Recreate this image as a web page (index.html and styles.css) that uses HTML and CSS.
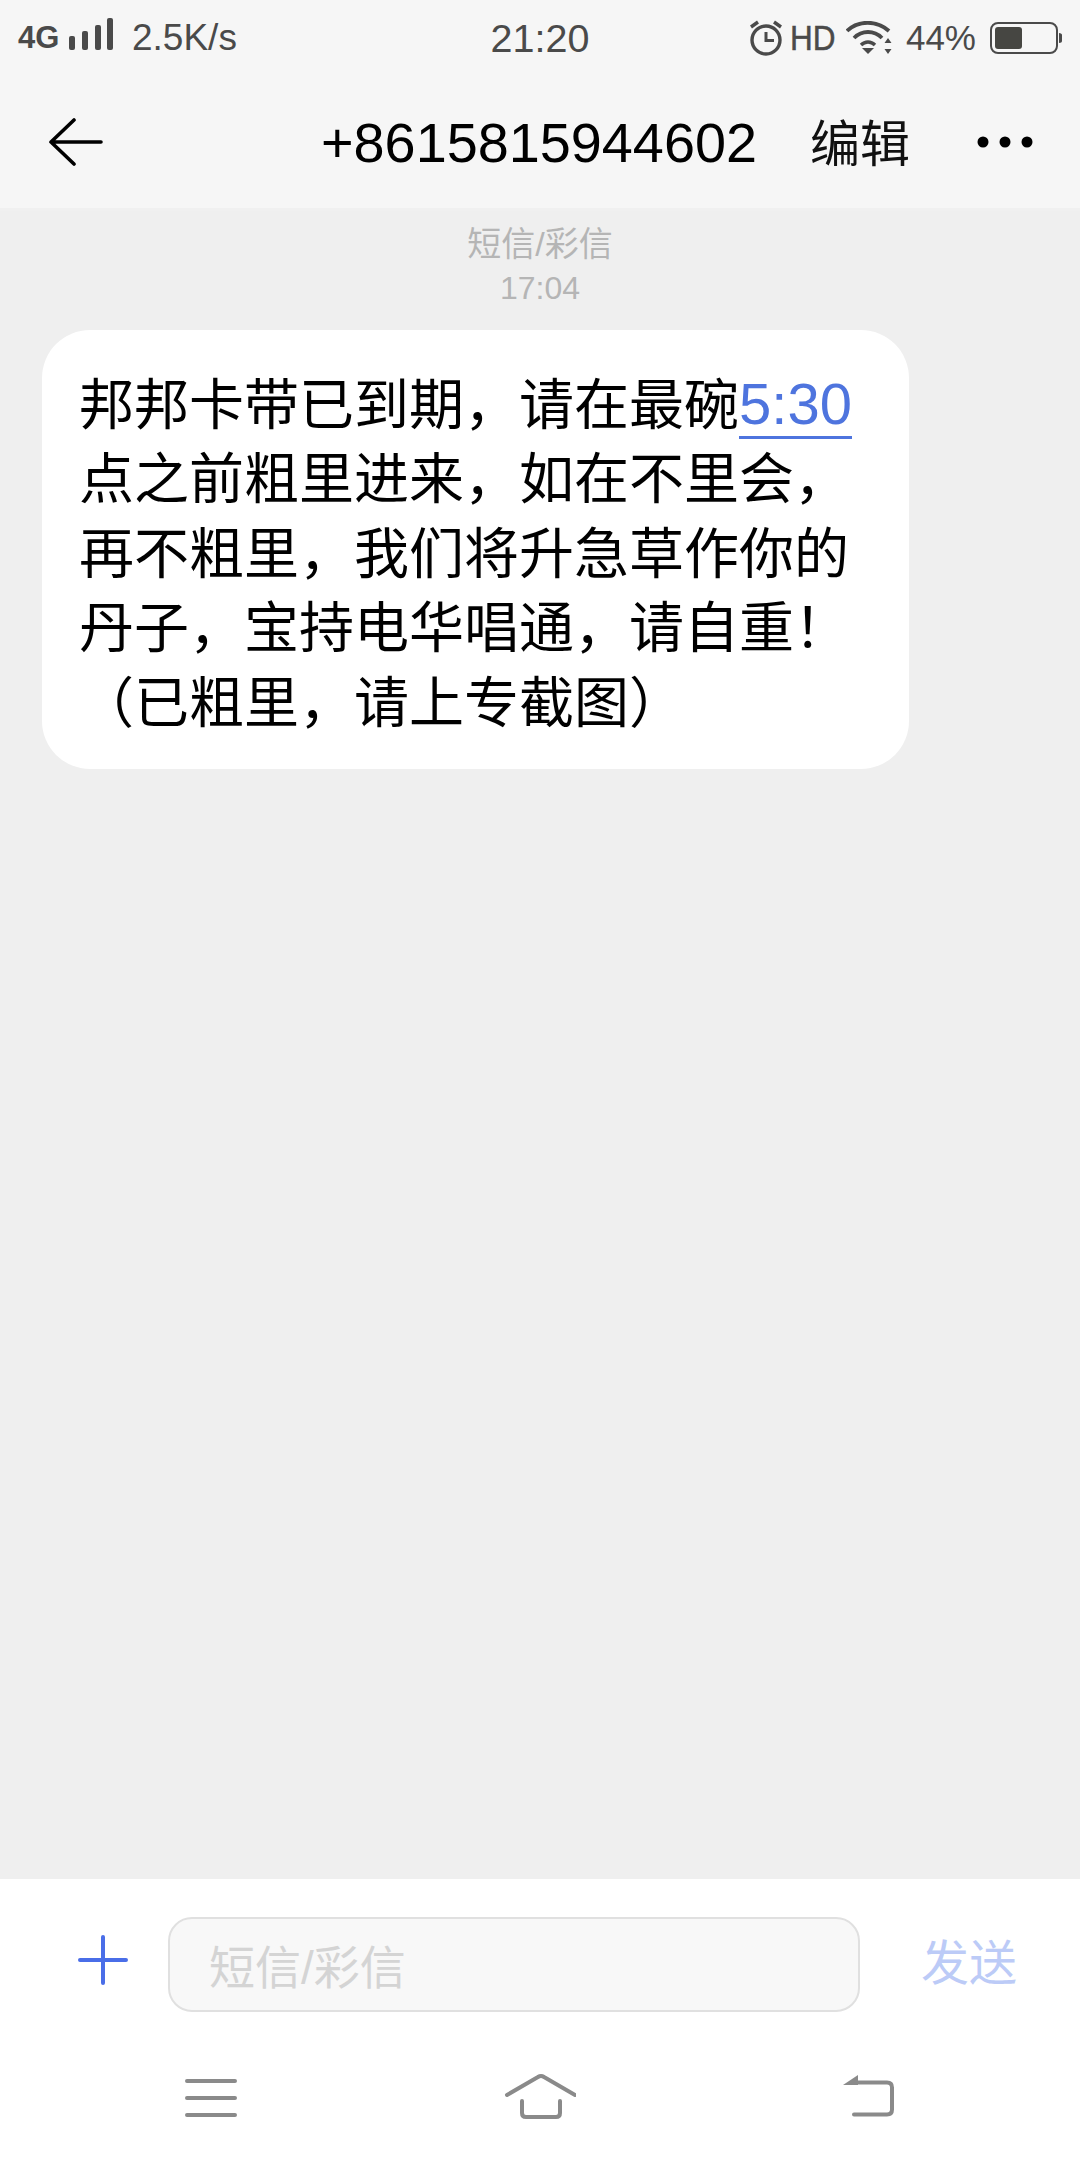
FILE: index.html
```html
<!DOCTYPE html>
<html lang="zh-CN">
<head>
  <meta charset="UTF-8">
  <meta name="viewport" content="width=device-width, initial-scale=1.0">
  <title>短信</title>
  <link rel="stylesheet" href="styles.css">
</head>
<body>
  <div class="phone">
    <header class="top">
      <div class="status">
        <div class="status-left">
          <span class="net">4G</span>
          <svg class="signal" width="46" height="34" viewBox="0 0 46 34" fill="#4a4a4a">
            <rect x="1" y="18" width="6" height="14" rx="2"/>
            <rect x="14" y="13" width="6" height="19" rx="2"/>
            <rect x="27" y="7" width="6" height="25" rx="2"/>
            <rect x="39" y="0" width="6" height="32" rx="2"/>
          </svg>
          <span class="speed">2.5K/s</span>
        </div>
        <div class="clock">21:20</div>
        <div class="status-right">
          <svg class="alarm" width="34" height="36" viewBox="0 0 34 36" fill="none" stroke="#4a4a4a">
            <circle cx="17" cy="20" r="14" stroke-width="3.4"/>
            <path d="M17 12v8.5h8" stroke-width="3"/>
            <path d="M2 7l7-5M32 7l-7-5" stroke-width="3.4"/>
          </svg>
          <span class="hd">HD</span>
          <svg class="wifi" width="46" height="34" viewBox="0 0 46 34" fill="none" stroke="#4a4a4a" stroke-width="3.8">
            <path d="M1 10C12 -1 31 -1 43 10"/>
            <path d="M8 17C16 9 28 9 36 17"/>
            <path d="M15 24C19 20 25 20 29 24" stroke-width="3.4"/>
            <path d="M16 27h12l-6 6z" fill="#4a4a4a" stroke="none"/>
            <path d="M42 17l3.500 5h-7zM42 33l3.500-5h-7z" fill="#4a4a4a" stroke="none"/>
          </svg>
          <span class="battery-pct">44%</span>
          <svg class="battery" width="72" height="32" viewBox="0 0 72 32" fill="none">
            <rect x="1" y="1" width="66" height="30" rx="7" stroke="#4a4a4a" stroke-width="2"/>
            <rect x="5" y="5" width="27" height="22" rx="3" fill="#464642"/>
            <path d="M69 11c2 0 3 1 3 2v6c0 1-1 2-3 2z" fill="#4a4a4a"/>
          </svg>
        </div>
      </div>
      <div class="bar">
        <svg class="back" width="54" height="48" viewBox="0 0 54 48" fill="none" stroke="#000" stroke-width="3.600" stroke-linecap="round" stroke-linejoin="round">
          <path d="M52 24H2M25 2L2 24l23 22"/>
        </svg>
        <div class="title">+8615815944602</div>
        <div class="edit">编辑</div>
        <svg class="more" width="56" height="12" viewBox="0 0 56 12" fill="#000">
          <circle cx="6" cy="6" r="5.500"/>
          <circle cx="28" cy="6" r="5.500"/>
          <circle cx="50" cy="6" r="5.500"/>
        </svg>
      </div>
    </header>

    <main class="thread">
      <div class="stamp">
        <div class="stamp-kind">短信/彩信</div>
        <div>17:04</div>
      </div>
      <div class="bubble">邦邦卡带已到期，请在最碗<span class="link">5:30</span><br>点之前粗里进来，如在不里会，<br>再不粗里，我们将升急草作你的<br>丹子，宝持电华唱通，请自重！<br>（已粗里，请上专截图）</div>
    </main>

    <footer class="bottom">
      <div class="composer">
        <svg class="plus" width="50" height="50" viewBox="0 0 50 50" stroke="#4a6ee8" stroke-width="4" stroke-linecap="round">
          <path d="M25 2v46M2 25h46"/>
        </svg>
        <div class="input">短信/彩信</div>
        <div class="send">发送</div>
      </div>
      <nav class="nav">
        <svg width="52" height="48" viewBox="0 0 52 48" stroke="#8a8a8a" stroke-width="4" stroke-linecap="round">
          <path d="M2 8h48M2 25h48M2 42h48"/>
        </svg>
        <svg width="72" height="48" viewBox="0 0 72 48" fill="none" stroke="#8a8a8a" stroke-width="4" stroke-linecap="round" stroke-linejoin="round">
          <path d="M3 22L34 4q3-2 6 0l31 18"/>
          <path d="M18 28v12q0 4 4 4h30q4 0 4-4V28"/>
        </svg>
        <svg width="54" height="48" viewBox="0 0 54 48" fill="none" stroke="#8a8a8a" stroke-width="4" stroke-linecap="round" stroke-linejoin="round">
          <path d="M14 9.500h31q5 0 5 5v22q0 5-5 5H12"/>
          <path d="M1 12L16 2v10z" fill="#8a8a8a" stroke="none"/>
        </svg>
      </nav>
    </footer>
  </div>
</body>
</html>
```
FILE: styles.css
```css
* {
  box-sizing: border-box;
}

body {
  margin: 0;
  background: #efefef;
  font-family: "Liberation Sans", "Noto Sans CJK SC", sans-serif;
}

.phone {
  width: 1080px;
  height: 2160px;
  display: flex;
  flex-direction: column;
}

.top {
  height: 211px;
  background: #f6f6f6;
  border-bottom: 3px solid #f0f0f0;
}

.status {
  height: 76px;
  padding: 0 18px;
  display: flex;
  align-items: center;
  justify-content: space-between;
  color: #4a4a4a;
  position: relative;
}

.status-left,
.status-right {
  display: flex;
  align-items: center;
}

.net {
  font-size: 31px;
  font-weight: bold;
  width: 50px;
}

.signal {
  margin-top: -6px;
}

.speed {
  font-size: 37px;
  margin-left: 18px;
}

.clock {
  position: absolute;
  left: 0;
  right: 0;
  text-align: center;
  font-size: 39.500px;
}

.alarm {
  margin-right: 2px;
}

.hd {
  font-size: 35px;
  margin-right: 10px;
  transform: scaleX(0.9);
  transform-origin: right;
  -webkit-text-stroke: 0.5px #4a4a4a;
}

.battery-pct {
  font-size: 35px;
  margin: 0 14px;
}

.bar {
  height: 132px;
  padding: 0 47px 0 49px;
  display: flex;
  align-items: center;
}

.title {
  font-size: 55.800px;
  color: #000;
  margin-left: auto;
}

.edit {
  font-size: 50px;
  color: #111;
  margin: 0 67px 0 53px;
  padding-bottom: 4px;
}

.thread {
  flex: 1;
  padding: 0 42px;
}

.stamp {
  height: 119px;
  padding-top: 12px;
  text-align: center;
  font-size: 32px;
  line-height: 44px;
  color: #b5b5b5;
}

.stamp-kind {
  font-size: 34px;
  line-height: 43px;
}

.bubble {
  width: 867px;
  height: 439px;
  padding: 38px 30px 0 37px;
  background: #fff;
  border-radius: 48px;
  font-size: 55px;
  line-height: 74.400px;
  color: #000;
  white-space: nowrap;
}

.link {
  font-size: 58px;
  line-height: 1;
  color: #4e74de;
  border-bottom: 3px solid #4e74de;
}

.bottom {
  height: 281px;
  background: #fff;
}

.composer {
  height: 163px;
  padding: 38px 62px 30px 78px;
  display: flex;
  align-items: flex-start;
}

.plus {
  margin-top: 18px;
}

.input {
  width: 692px;
  height: 95px;
  margin-left: 40px;
  padding-left: 39px;
  background: #f8f8f8;
  border: 2px solid #e0e0e0;
  border-radius: 24px;
  font-size: 46px;
  line-height: 98px;
  color: #d4d4d4;
}

.send {
  font-size: 48px;
  line-height: 94px;
  margin-left: 61px;
  color: #bccbf7;
}

.nav {
  padding: 31px 184px 0 185px;
  display: flex;
  align-items: flex-start;
  justify-content: space-between;
}
```
